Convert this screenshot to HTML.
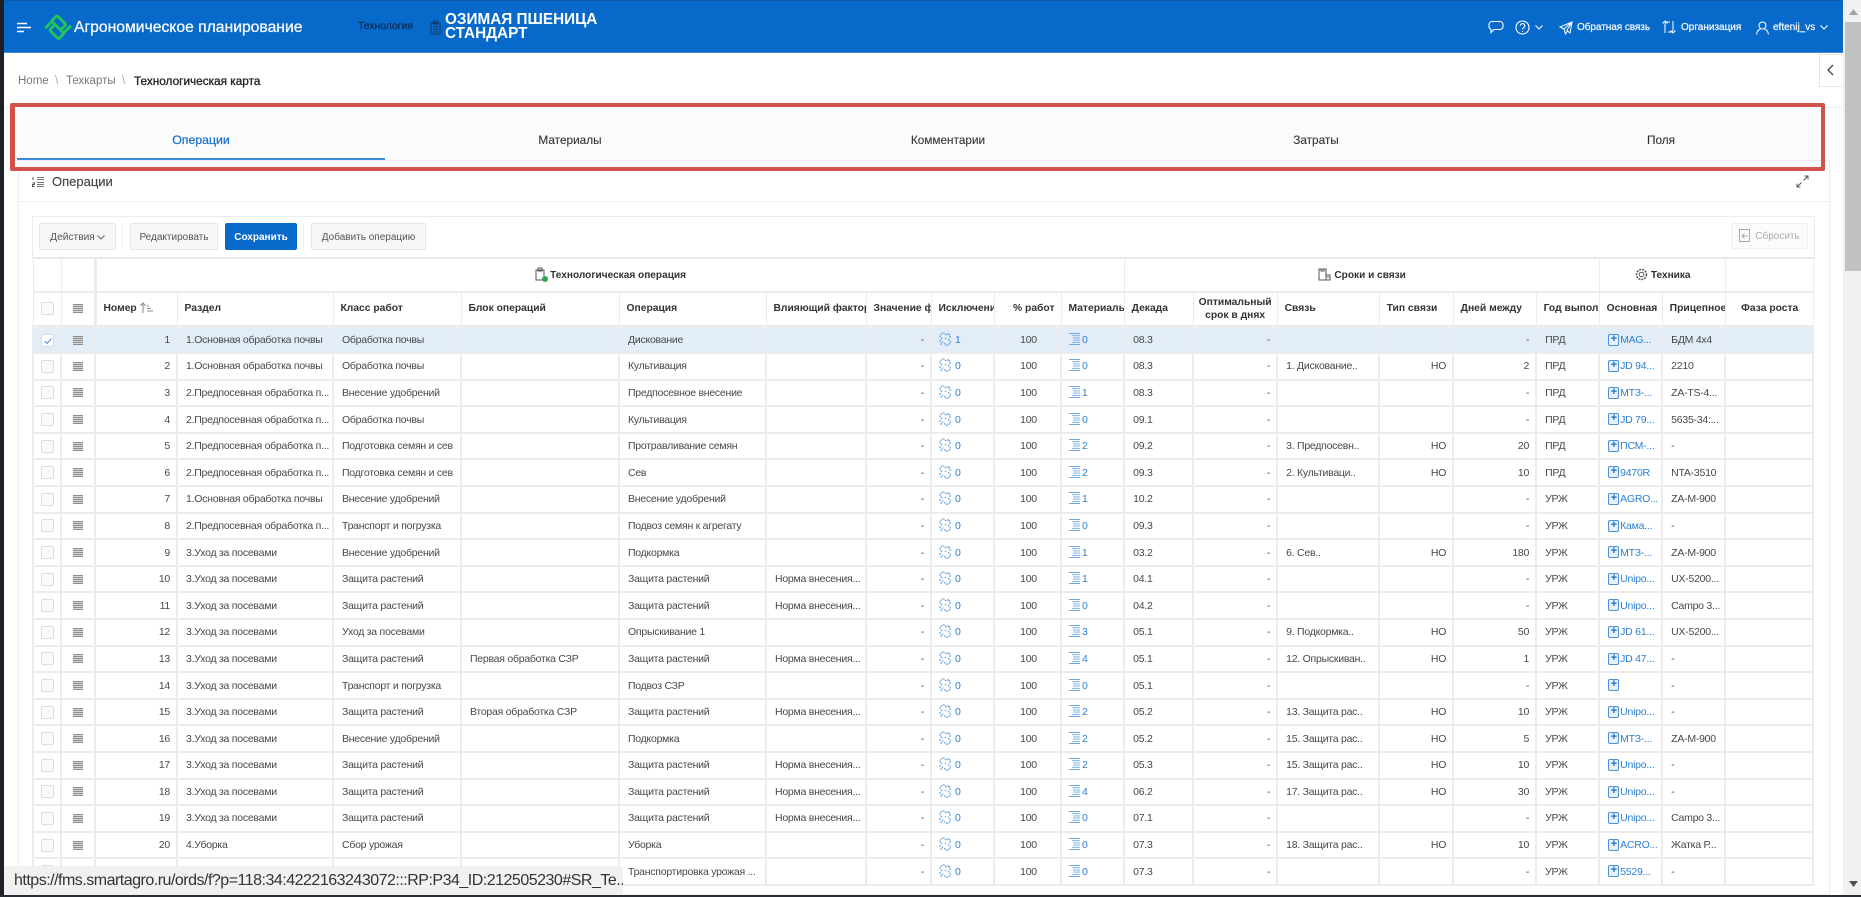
<!DOCTYPE html>
<html lang="ru"><head><meta charset="utf-8"><title>Технологическая карта</title>
<style>
*{box-sizing:border-box}
html,body{margin:0;padding:0;width:1861px;height:897px;overflow:hidden;background:#fff;font-family:"Liberation Sans","Noto Sans CJK SC",sans-serif;color:#404040}
.a{position:absolute;white-space:nowrap}
svg{display:block;overflow:visible}
#hd{left:0;top:0;width:1843px;height:53px;background:#0769c9;border-top:1px solid #0d5aa8;border-bottom:1px solid #3d8ad8}
.w{color:#f1f6fc;font-size:10px;-webkit-text-stroke:.25px #f1f6fc}
#tabs{left:15px;top:106px;width:1806px;height:61px;background:#fbfbfb}
.tb{font-size:11.8px;color:#333;top:133px;transform:translateX(-50%);-webkit-text-stroke:.1px #333}
#red{left:10px;top:103px;width:1815px;height:68px;border:4px solid #d1524a;border-left-width:5px;border-radius:2px}
.btn{height:27px;line-height:27px;top:223px;border:1px solid #e6e6e6;border-radius:2px;background:#f7f7f7;font-size:10px;color:#555;text-align:center}
table{position:absolute;left:32px;top:258px;width:1780px;table-layout:fixed;border-collapse:collapse;background:#fff}
td,th{overflow:hidden;white-space:nowrap;padding:0 6px 0 8px;border:2px solid #ececec;font-size:10.5px;letter-spacing:-.25px;line-height:12px;color:#484848;font-weight:400;text-align:left}
th{font-weight:700;letter-spacing:0;color:#333;font-size:10.3px;padding-left:7px;border-width:1px 1px 3px 1px;border-color:#ececec}
thead tr:first-child th{border-bottom-width:2px;text-align:center;font-size:10.1px}
tr.g{height:33px}tr.h{height:35px}tbody tr{height:26.6px}
tr.s td{background:#e3edf8}
.r{text-align:right}.c{text-align:center}
td.n{padding:0}
.cb{display:block;width:13px;height:13px;border:1px solid #dcdcdc;border-radius:2px;background:#fafafa;margin:0 auto}
.dr{display:block;width:10px;height:9px;margin:0 auto;background:repeating-linear-gradient(#8c8c8c 0 1px,#d8d8d8 1px 2px)}
.l{color:#2d7fd3}
td.x{padding-left:6px}
.x svg{display:inline-block;vertical-align:-1px;margin:-2px 3px -2px 0;width:14px;height:14px}
.m svg{display:inline-block;vertical-align:0;margin:-2px 1px -2px 0;width:12px;height:12px}
td.m{padding-left:7px}
td.p{padding:0 0 0 8px}
.pl{display:inline-block;width:11px;height:12px;border:1px solid #4a92dc;border-radius:2px;background:#e9f2fb;color:#1c6fc6;font-size:11px;letter-spacing:0;line-height:9px;text-align:center;font-weight:700;vertical-align:middle;margin:-3px 1px -2px 0}
</style></head><body>
<svg width="0" height="0" style="position:absolute"><defs>
<symbol id="ex" viewBox="0 0 14 14"><path d="M8.500 3.200 6.600 1.500a2 2 0 0 0-2.800 0L2.600 2.700a2 2 0 0 0 0 2.800l1.600 1.600M6 11.200l1.800 1.500a2 2 0 0 0 2.800 0l1.200-1.200a2 2 0 0 0 0-2.800l-1.700-1.600M1 9h2M3 11v2M5 9.500 4 11M10 1v2M12 2l-1 1.500M13 5h-2M7 6l1 1" fill="none" stroke="#4f97e0" stroke-width="1" stroke-dasharray="2 .7"/></symbol>
<symbol id="li" viewBox="0 0 12 12"><path d="M0 .5h11M3 2.700h8M4 4.900h7M4 7.100h7M3 9.300h8M0 11.500h11" fill="none" stroke="#6aa9e6" stroke-width=".9"/></symbol>
</defs></svg>

<div class="a" id="hd"></div>
<svg class="a" style="left:17px;top:22px" width="15" height="11"><path d="M0 1.500h10M0 5.500h14M0 9.500h7" stroke="#fff" stroke-width="1.400"/></svg>
<svg class="a" style="left:44px;top:13px" width="28" height="28" viewBox="0 0 28 28"><g fill="none" stroke="#1fc45c" stroke-width="3" stroke-linecap="round" stroke-linejoin="round"><path d="M8.500 7 12 3.500a1.500 1.500 0 0 1 2 0l7 7a1.500 1.500 0 0 1 0 2L17.500 16a1.500 1.500 0 0 1-2 0l-7-7a1.500 1.500 0 0 1 0-2z"/><path d="M6.500 15.500 10 12a1.500 1.500 0 0 1 2 0l7 7a1.500 1.500 0 0 1 0 2l-3.500 3.500a1.500 1.500 0 0 1-2 0l-7-7a1.500 1.500 0 0 1 0-2z" transform="translate(0 .5)"/><path d="M2 14.500 7.500 9M26 13.500 20 19.500"/></g></svg>
<div class="a" style="left:74px;top:19px;font-size:15.700px;line-height:18px;color:#f4f8fd;-webkit-text-stroke:.3px #f4f8fd">Агрономическое планирование</div>
<div class="a" style="left:358px;top:21px;font-size:10.400px;line-height:12px;color:#0f2a4d;-webkit-text-stroke:.15px #0f2a4d">Технология</div>
<svg class="a" style="left:430px;top:20px" width="11" height="15"><path d="M1 3h9v11H1zM3.500 1h4v3h-4zM3 7h5M3 9.500h5M3 12h5" fill="none" stroke="#17365c" stroke-width="1"/></svg>
<div class="a" style="left:445px;top:13px;font-size:15.300px;line-height:14px;font-weight:700;color:#fff">ОЗИМАЯ ПШЕНИЦА<br>СТАНДАРТ</div>

<svg class="a" style="left:1488px;top:20px" width="16" height="14"><path d="M4 1.500h8a3 3 0 0 1 3 3v2a3 3 0 0 1-3 3H6l-3 3V9.300A3 3 0 0 1 1 6.500v-2a3 3 0 0 1 3-3z" fill="none" stroke="#fff" stroke-width="1.100"/></svg>
<svg class="a" style="left:1515px;top:20px" width="15" height="15"><circle cx="7.500" cy="7.500" r="6.500" fill="none" stroke="#fff" stroke-width="1.100"/><path d="M5.300 5.800a2.200 2.200 0 1 1 3.300 1.900c-.8.500-1.100.9-1.100 1.800M7.500 11v1" fill="none" stroke="#fff" stroke-width="1.100"/></svg>
<svg class="a" style="left:1535px;top:25px" width="8" height="5"><path d="M.5.500l3.500 3.500L7.500.500" fill="none" stroke="#fff" stroke-width="1.100"/></svg>
<svg class="a" style="left:1559px;top:21px" width="14" height="14"><path d="M13 1 1 6l4 2 1.500 5 2-3 2.500 2zM5 8l8-7-5.500 9" fill="none" stroke="#fff" stroke-width="1"/></svg>
<div class="a w" style="left:1577px;top:21px;line-height:13px;letter-spacing:-.05px">Обратная связь</div>
<svg class="a" style="left:1662px;top:20px" width="14" height="14"><path d="M3 13V4a2 2 0 0 1 2-2h3M.5 3.500 3 1l2.500 2.500M11 1v9a2 2 0 0 1-2 2H6M8.500 10.500 11 13l2.500-2.500" fill="none" stroke="#fff" stroke-width="1"/></svg>
<div class="a w" style="left:1681px;top:21px;line-height:13px">Организация</div>
<svg class="a" style="left:1756px;top:21px" width="13" height="14"><circle cx="6.500" cy="4.500" r="3.500" fill="none" stroke="#fff"/><path d="M.5 13.500c.5-3 2-5 4-5.500M12.500 13.500c-.5-3-2-5-4-5.500" fill="none" stroke="#fff"/></svg>
<div class="a w" style="left:1773px;top:21px;line-height:13px">eftenij_vs</div>
<svg class="a" style="left:1820px;top:25px" width="8" height="5"><path d="M.5.500l3.500 3.500L7.500.500" fill="none" stroke="#fff" stroke-width="1.100"/></svg>

<div class="a" style="left:1819px;top:54px;width:24px;height:33px;border:1px solid #e6e6e6;border-right:0;background:#fff"></div>
<svg class="a" style="left:1827px;top:64px" width="7" height="12"><path d="M6 1 1 6l5 5" fill="none" stroke="#444" stroke-width="1.300"/></svg>

<div class="a" style="left:18px;top:74px;font-size:11.500px;line-height:14px;color:#777">Home</div>
<div class="a" style="left:55px;top:74px;font-size:11.500px;line-height:14px;color:#aaa">\</div>
<div class="a" style="left:66px;top:74px;font-size:11.500px;line-height:14px;color:#777">Техкарты</div>
<div class="a" style="left:122px;top:74px;font-size:11.500px;line-height:14px;color:#aaa">\</div>
<div class="a" style="left:134px;top:74px;font-size:11.800px;line-height:14px;color:#222;-webkit-text-stroke:.3px #222">Технологическая карта</div>

<div class="a" style="left:4px;top:107px;width:1839px;height:1px;background:#efefef"></div>
<div class="a" style="left:18px;top:160px;width:1812px;height:735px;border:1px solid #ececec;background:#fff"></div>
<div class="a" id="tabs"></div>
<div class="a" style="left:17px;top:160px;width:1804px;height:1px;background:#ececec"></div>
<div class="a" style="left:17px;top:158px;width:368px;height:2px;background:#3e88d6"></div>
<div class="a tb" style="left:201px;font-size:12.300px;color:#1a72cc;-webkit-text-stroke:.25px #1a72cc">Операции</div>
<div class="a tb" style="left:570px">Материалы</div>
<div class="a tb" style="left:948px">Комментарии</div>
<div class="a tb" style="left:1316px">Затраты</div>
<div class="a tb" style="left:1661px">Поля</div>
<div class="a" id="red"></div>

<svg class="a" style="left:32px;top:176px" width="13" height="13"><path d="M5 1.500h7M5 3.500h7M5 6.500h7M5 8.500h7M5 10.500h7" stroke="#777" stroke-width="1"/><path d="M1 1v3M.5 7h2v1.500h-2v2h2" fill="none" stroke="#555"/></svg>
<div class="a" style="left:52px;top:174px;font-size:13px;line-height:16px;color:#444;-webkit-text-stroke:.15px #444">Операции</div>
<svg class="a" style="left:1796px;top:175px" width="13" height="13"><path d="M7.500 5.500 12 1M8.500 1H12v3.500M5.500 7.500 1 12M1 8.500V12h3.500" fill="none" stroke="#555" stroke-width="1"/></svg>
<div class="a" style="left:19px;top:201px;width:1810px;height:1px;background:#efefef"></div>

<div class="a" style="left:32px;top:216px;width:1783px;height:43px;border:1px solid #ececec;border-bottom:2px solid #e6e6e6;background:#fff"></div>
<div class="a btn" style="left:39px;width:77px;padding-right:10px;font-size:10.200px">Действия</div>
<svg class="a" style="left:97px;top:235px" width="8" height="5"><path d="M.5.500l3.500 3.500L7.500.500" fill="none" stroke="#666" stroke-width="1"/></svg>
<div class="a" style="left:122px;top:223px;width:1px;height:27px;background:#eee"></div>
<div class="a btn" style="left:130px;width:88px">Редактировать</div>
<div class="a btn" style="left:225px;width:72px;background:#0769c9;border-color:#0769c9;color:#fff;font-weight:700">Сохранить</div>
<div class="a" style="left:303px;top:223px;width:1px;height:27px;background:#eee"></div>
<div class="a btn" style="left:311px;width:115px">Добавить операцию</div>
<div class="a btn" style="left:1731px;width:77px;height:26px;line-height:25px;background:#fbfbfb;border-color:#f0f0f0;color:#aaa;padding-left:16px">Сбросить</div>
<svg class="a" style="left:1738px;top:229px" width="13" height="14"><path d="M1.500.500h10v12h-10zM10 7H4M6.500 4.500 4 7l2.500 2.500" fill="none" stroke="#aaa"/></svg>

<table>
<colgroup><col style="width:28px"><col style="width:34px"><col style="width:82px"><col style="width:156px"><col style="width:128px"><col style="width:158px"><col style="width:147px"><col style="width:100px"><col style="width:65px"><col style="width:63px"><col style="width:67px"><col style="width:63px"><col style="width:69px"><col style="width:84px"><col style="width:102px"><col style="width:74px"><col style="width:83px"><col style="width:63px"><col style="width:63px"><col style="width:63px"><col style="width:88px"></colgroup>
<thead>
<tr class="g"><th></th><th style="border-right-width:3px"></th><th colspan="10"><svg style="display:inline-block;vertical-align:-4px;margin-right:2px" width="13" height="15"><path d="M1 3h8v10H1zM3 1h4v3H3z" fill="#fff" stroke="#555"/><circle cx="10" cy="12" r="3" fill="#2fa84f"/></svg>Технологическая операция</th><th colspan="6"><svg style="display:inline-block;vertical-align:-3px;margin-right:3px" width="13" height="13"><path d="M1 1h7v11H1zM3 1v2h3V1M8 7h4v5H8M9 9h2" fill="none" stroke="#555"/></svg>Сроки и связи</th><th colspan="2"><svg style="display:inline-block;vertical-align:-3px;margin-right:3px" width="13" height="13"><circle cx="6.500" cy="6.500" r="2.300" fill="none" stroke="#555"/><circle cx="6.500" cy="6.500" r="5" fill="none" stroke="#555" stroke-width="1.500" stroke-dasharray="2 1"/></svg>Техника</th><th></th></tr>
<tr class="h"><th class="n c"><i class="cb"></i></th><th class="n" style="border-right-width:3px"><i class="dr"></i></th><th>Номер <svg style="display:inline-block;vertical-align:-2px" width="13" height="11"><path d="M3 11V1M.5 3.500 3 1l2.500 2.500M7 9h6M7 6.500h4M7 4h2" fill="none" stroke="#888"/></svg></th><th>Раздел</th><th>Класс работ</th><th>Блок операций</th><th>Операция</th><th>Влияющий фактор</th><th>Значение фактора</th><th>Исключения</th><th class="r">% работ</th><th>Материалы</th><th>Декада</th><th class="c" style="padding:0;white-space:normal;line-height:13px">Оптимальный<br>срок в днях</th><th>Связь</th><th>Тип связи</th><th>Дней между</th><th>Год выполнения</th><th>Основная</th><th>Прицепное</th><th class="c">Фаза роста</th></tr>
</thead>
<tbody>
<tr class="s"><td class="n"><i class="cb" style="background:#fff;position:relative"><svg style="position:absolute;left:2px;top:3px" width="8" height="6"><path d="M.5 3l2.500 2.500L7.500.5" fill="none" stroke="#4a95de"/></svg></i></td><td class="n"><i class="dr"></i></td><td class="r">1</td><td>1.Основная обработка почвы</td><td>Обработка почвы</td><td></td><td>Дискование</td><td></td><td class="r">-</td><td class="x l"><svg><use href="#ex"/></svg>1</td><td class="c">100</td><td class="m l"><svg><use href="#li"/></svg>0</td><td>08.3</td><td class="r">-</td><td></td><td></td><td class="r">-</td><td>ПРД</td><td class="p l"><i class="pl">+</i>MAG...</td><td>БДМ 4x4</td><td></td></tr>
<tr><td class="n"><i class="cb"></i></td><td class="n"><i class="dr"></i></td><td class="r">2</td><td>1.Основная обработка почвы</td><td>Обработка почвы</td><td></td><td>Культивация</td><td></td><td class="r">-</td><td class="x l"><svg><use href="#ex"/></svg>0</td><td class="c">100</td><td class="m l"><svg><use href="#li"/></svg>0</td><td>08.3</td><td class="r">-</td><td>1. Дискование..</td><td class="r">НО</td><td class="r">2</td><td>ПРД</td><td class="p l"><i class="pl">+</i>JD 94...</td><td>2210</td><td></td></tr>
<tr><td class="n"><i class="cb"></i></td><td class="n"><i class="dr"></i></td><td class="r">3</td><td>2.Предпосевная обработка п...</td><td>Внесение удобрений</td><td></td><td>Предпосевное внесение</td><td></td><td class="r">-</td><td class="x l"><svg><use href="#ex"/></svg>0</td><td class="c">100</td><td class="m l"><svg><use href="#li"/></svg>1</td><td>08.3</td><td class="r">-</td><td></td><td></td><td class="r">-</td><td>ПРД</td><td class="p l"><i class="pl">+</i>МТЗ-...</td><td>ZA-TS-4...</td><td></td></tr>
<tr><td class="n"><i class="cb"></i></td><td class="n"><i class="dr"></i></td><td class="r">4</td><td>2.Предпосевная обработка п...</td><td>Обработка почвы</td><td></td><td>Культивация</td><td></td><td class="r">-</td><td class="x l"><svg><use href="#ex"/></svg>0</td><td class="c">100</td><td class="m l"><svg><use href="#li"/></svg>0</td><td>09.1</td><td class="r">-</td><td></td><td></td><td class="r">-</td><td>ПРД</td><td class="p l"><i class="pl">+</i>JD 79...</td><td>5635-34:...</td><td></td></tr>
<tr><td class="n"><i class="cb"></i></td><td class="n"><i class="dr"></i></td><td class="r">5</td><td>2.Предпосевная обработка п...</td><td>Подготовка семян и сев</td><td></td><td>Протравливание семян</td><td></td><td class="r">-</td><td class="x l"><svg><use href="#ex"/></svg>0</td><td class="c">100</td><td class="m l"><svg><use href="#li"/></svg>2</td><td>09.2</td><td class="r">-</td><td>3. Предпосевн..</td><td class="r">НО</td><td class="r">20</td><td>ПРД</td><td class="p l"><i class="pl">+</i>ПСМ-...</td><td>-</td><td></td></tr>
<tr><td class="n"><i class="cb"></i></td><td class="n"><i class="dr"></i></td><td class="r">6</td><td>2.Предпосевная обработка п...</td><td>Подготовка семян и сев</td><td></td><td>Сев</td><td></td><td class="r">-</td><td class="x l"><svg><use href="#ex"/></svg>0</td><td class="c">100</td><td class="m l"><svg><use href="#li"/></svg>2</td><td>09.3</td><td class="r">-</td><td>2. Культиваци..</td><td class="r">НО</td><td class="r">10</td><td>ПРД</td><td class="p l"><i class="pl">+</i>9470R</td><td>NTA-3510</td><td></td></tr>
<tr><td class="n"><i class="cb"></i></td><td class="n"><i class="dr"></i></td><td class="r">7</td><td>1.Основная обработка почвы</td><td>Внесение удобрений</td><td></td><td>Внесение удобрений</td><td></td><td class="r">-</td><td class="x l"><svg><use href="#ex"/></svg>0</td><td class="c">100</td><td class="m l"><svg><use href="#li"/></svg>1</td><td>10.2</td><td class="r">-</td><td></td><td></td><td class="r">-</td><td>УРЖ</td><td class="p l"><i class="pl">+</i>AGRO...</td><td>ZA-M-900</td><td></td></tr>
<tr><td class="n"><i class="cb"></i></td><td class="n"><i class="dr"></i></td><td class="r">8</td><td>2.Предпосевная обработка п...</td><td>Транспорт и погрузка</td><td></td><td>Подвоз семян к агрегату</td><td></td><td class="r">-</td><td class="x l"><svg><use href="#ex"/></svg>0</td><td class="c">100</td><td class="m l"><svg><use href="#li"/></svg>0</td><td>09.3</td><td class="r">-</td><td></td><td></td><td class="r">-</td><td>УРЖ</td><td class="p l"><i class="pl">+</i>Кама...</td><td>-</td><td></td></tr>
<tr><td class="n"><i class="cb"></i></td><td class="n"><i class="dr"></i></td><td class="r">9</td><td>3.Уход за посевами</td><td>Внесение удобрений</td><td></td><td>Подкормка</td><td></td><td class="r">-</td><td class="x l"><svg><use href="#ex"/></svg>0</td><td class="c">100</td><td class="m l"><svg><use href="#li"/></svg>1</td><td>03.2</td><td class="r">-</td><td>6. Сев..</td><td class="r">НО</td><td class="r">180</td><td>УРЖ</td><td class="p l"><i class="pl">+</i>МТЗ-...</td><td>ZA-M-900</td><td></td></tr>
<tr><td class="n"><i class="cb"></i></td><td class="n"><i class="dr"></i></td><td class="r">10</td><td>3.Уход за посевами</td><td>Защита растений</td><td></td><td>Защита растений</td><td>Норма внесения...</td><td class="r">-</td><td class="x l"><svg><use href="#ex"/></svg>0</td><td class="c">100</td><td class="m l"><svg><use href="#li"/></svg>1</td><td>04.1</td><td class="r">-</td><td></td><td></td><td class="r">-</td><td>УРЖ</td><td class="p l"><i class="pl">+</i>Unipo...</td><td>UX-5200...</td><td></td></tr>
<tr><td class="n"><i class="cb"></i></td><td class="n"><i class="dr"></i></td><td class="r">11</td><td>3.Уход за посевами</td><td>Защита растений</td><td></td><td>Защита растений</td><td>Норма внесения...</td><td class="r">-</td><td class="x l"><svg><use href="#ex"/></svg>0</td><td class="c">100</td><td class="m l"><svg><use href="#li"/></svg>0</td><td>04.2</td><td class="r">-</td><td></td><td></td><td class="r">-</td><td>УРЖ</td><td class="p l"><i class="pl">+</i>Unipo...</td><td>Campo 3...</td><td></td></tr>
<tr><td class="n"><i class="cb"></i></td><td class="n"><i class="dr"></i></td><td class="r">12</td><td>3.Уход за посевами</td><td>Уход за посевами</td><td></td><td>Опрыскивание 1</td><td></td><td class="r">-</td><td class="x l"><svg><use href="#ex"/></svg>0</td><td class="c">100</td><td class="m l"><svg><use href="#li"/></svg>3</td><td>05.1</td><td class="r">-</td><td>9. Подкормка..</td><td class="r">НО</td><td class="r">50</td><td>УРЖ</td><td class="p l"><i class="pl">+</i>JD 61...</td><td>UX-5200...</td><td></td></tr>
<tr><td class="n"><i class="cb"></i></td><td class="n"><i class="dr"></i></td><td class="r">13</td><td>3.Уход за посевами</td><td>Защита растений</td><td>Первая обработка СЗР</td><td>Защита растений</td><td>Норма внесения...</td><td class="r">-</td><td class="x l"><svg><use href="#ex"/></svg>0</td><td class="c">100</td><td class="m l"><svg><use href="#li"/></svg>4</td><td>05.1</td><td class="r">-</td><td>12. Опрыскиван..</td><td class="r">НО</td><td class="r">1</td><td>УРЖ</td><td class="p l"><i class="pl">+</i>JD 47...</td><td>-</td><td></td></tr>
<tr><td class="n"><i class="cb"></i></td><td class="n"><i class="dr"></i></td><td class="r">14</td><td>3.Уход за посевами</td><td>Транспорт и погрузка</td><td></td><td>Подвоз СЗР</td><td></td><td class="r">-</td><td class="x l"><svg><use href="#ex"/></svg>0</td><td class="c">100</td><td class="m l"><svg><use href="#li"/></svg>0</td><td>05.1</td><td class="r">-</td><td></td><td></td><td class="r">-</td><td>УРЖ</td><td class="p l"><i class="pl">+</i></td><td>-</td><td></td></tr>
<tr><td class="n"><i class="cb"></i></td><td class="n"><i class="dr"></i></td><td class="r">15</td><td>3.Уход за посевами</td><td>Защита растений</td><td>Вторая обработка СЗР</td><td>Защита растений</td><td>Норма внесения...</td><td class="r">-</td><td class="x l"><svg><use href="#ex"/></svg>0</td><td class="c">100</td><td class="m l"><svg><use href="#li"/></svg>2</td><td>05.2</td><td class="r">-</td><td>13. Защита рас..</td><td class="r">НО</td><td class="r">10</td><td>УРЖ</td><td class="p l"><i class="pl">+</i>Unipo...</td><td>-</td><td></td></tr>
<tr><td class="n"><i class="cb"></i></td><td class="n"><i class="dr"></i></td><td class="r">16</td><td>3.Уход за посевами</td><td>Внесение удобрений</td><td></td><td>Подкормка</td><td></td><td class="r">-</td><td class="x l"><svg><use href="#ex"/></svg>0</td><td class="c">100</td><td class="m l"><svg><use href="#li"/></svg>2</td><td>05.2</td><td class="r">-</td><td>15. Защита рас..</td><td class="r">НО</td><td class="r">5</td><td>УРЖ</td><td class="p l"><i class="pl">+</i>МТЗ-...</td><td>ZA-M-900</td><td></td></tr>
<tr><td class="n"><i class="cb"></i></td><td class="n"><i class="dr"></i></td><td class="r">17</td><td>3.Уход за посевами</td><td>Защита растений</td><td></td><td>Защита растений</td><td>Норма внесения...</td><td class="r">-</td><td class="x l"><svg><use href="#ex"/></svg>0</td><td class="c">100</td><td class="m l"><svg><use href="#li"/></svg>2</td><td>05.3</td><td class="r">-</td><td>15. Защита рас..</td><td class="r">НО</td><td class="r">10</td><td>УРЖ</td><td class="p l"><i class="pl">+</i>Unipo...</td><td>-</td><td></td></tr>
<tr><td class="n"><i class="cb"></i></td><td class="n"><i class="dr"></i></td><td class="r">18</td><td>3.Уход за посевами</td><td>Защита растений</td><td></td><td>Защита растений</td><td>Норма внесения...</td><td class="r">-</td><td class="x l"><svg><use href="#ex"/></svg>0</td><td class="c">100</td><td class="m l"><svg><use href="#li"/></svg>4</td><td>06.2</td><td class="r">-</td><td>17. Защита рас..</td><td class="r">НО</td><td class="r">30</td><td>УРЖ</td><td class="p l"><i class="pl">+</i>Unipo...</td><td>-</td><td></td></tr>
<tr><td class="n"><i class="cb"></i></td><td class="n"><i class="dr"></i></td><td class="r">19</td><td>3.Уход за посевами</td><td>Защита растений</td><td></td><td>Защита растений</td><td>Норма внесения...</td><td class="r">-</td><td class="x l"><svg><use href="#ex"/></svg>0</td><td class="c">100</td><td class="m l"><svg><use href="#li"/></svg>0</td><td>07.1</td><td class="r">-</td><td></td><td></td><td class="r">-</td><td>УРЖ</td><td class="p l"><i class="pl">+</i>Unipo...</td><td>Campo 3...</td><td></td></tr>
<tr><td class="n"><i class="cb"></i></td><td class="n"><i class="dr"></i></td><td class="r">20</td><td>4.Уборка</td><td>Сбор урожая</td><td></td><td>Уборка</td><td></td><td class="r">-</td><td class="x l"><svg><use href="#ex"/></svg>0</td><td class="c">100</td><td class="m l"><svg><use href="#li"/></svg>0</td><td>07.3</td><td class="r">-</td><td>18. Защита рас..</td><td class="r">НО</td><td class="r">10</td><td>УРЖ</td><td class="p l"><i class="pl">+</i>ACRO...</td><td>Жатка Р...</td><td></td></tr>
<tr><td class="n"><i class="cb"></i></td><td class="n"><i class="dr"></i></td><td class="r">21</td><td>4.Уборка</td><td>Транспорт и погрузка</td><td></td><td>Транспортировка урожая ...</td><td></td><td class="r">-</td><td class="x l"><svg><use href="#ex"/></svg>0</td><td class="c">100</td><td class="m l"><svg><use href="#li"/></svg>0</td><td>07.3</td><td class="r">-</td><td></td><td></td><td class="r">-</td><td>УРЖ</td><td class="p l"><i class="pl">+</i>5529...</td><td>-</td><td></td></tr>
</tbody></table>

<div class="a" style="left:1843px;top:0;width:18px;height:897px;background:#f1f1f1"></div>
<div class="a" style="left:1845px;top:22px;width:16px;height:249px;background:#c1c1c1"></div>
<svg class="a" style="left:1849px;top:9px" width="9" height="6"><path d="M0 6 4.500 0 9 6z" fill="#a3a3a3"/></svg>
<svg class="a" style="left:1849px;top:881px" width="9" height="6"><path d="M0 0 4.500 6 9 0z" fill="#505050"/></svg>

<div class="a" style="left:4px;top:866px;width:619px;height:30px;background:#f1f1f1;border-top-right-radius:2px;font-size:16px;letter-spacing:-.5px;line-height:30px;color:#333;padding-left:10px;overflow:hidden">https://fms.smartagro.ru/ords/f?p=118:34:4222163243072:::RP:P34_ID:212505230#SR_Te..</div>
<div class="a" style="left:0;top:0;width:4px;height:897px;background:#1e2028"></div>
<div class="a" style="left:0;top:895px;width:1861px;height:2px;background:#2a2c33"></div>
</body></html>
